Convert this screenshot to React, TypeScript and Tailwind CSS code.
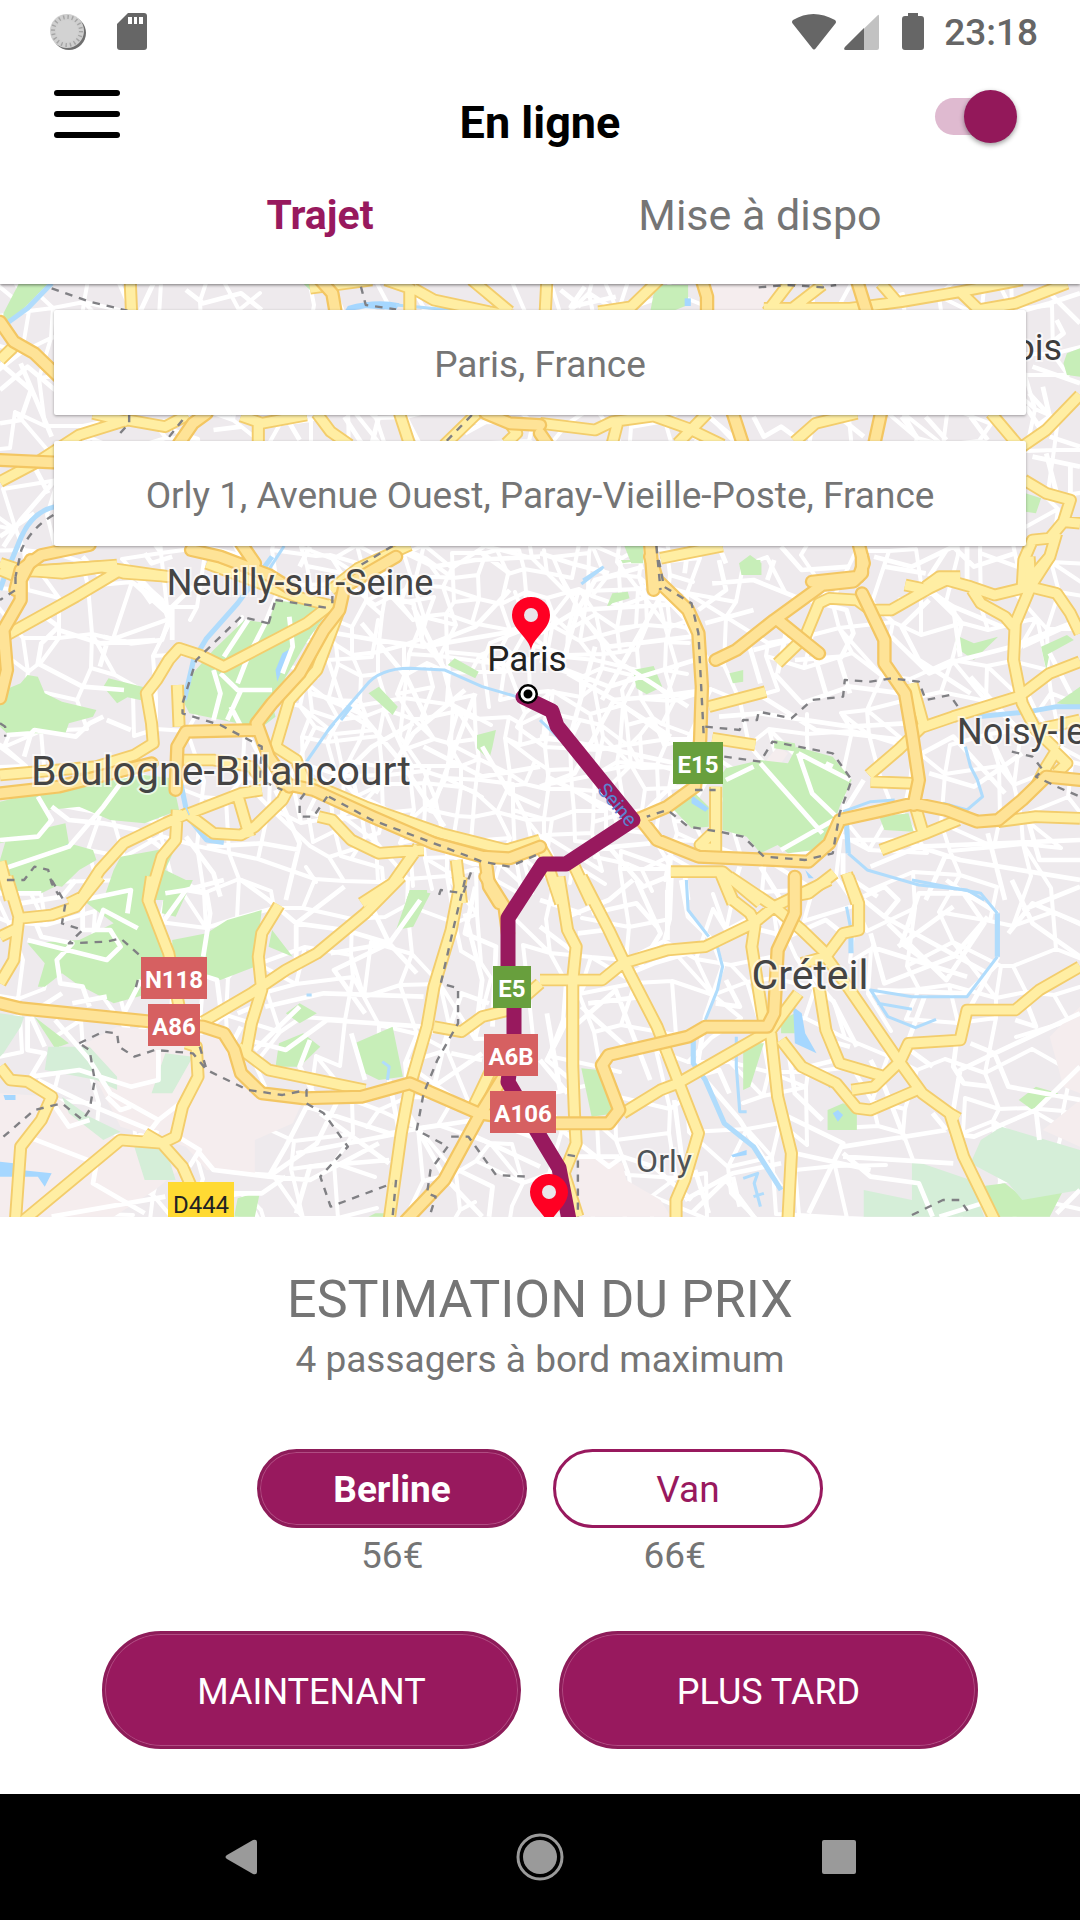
import { useState } from "react";

type Tile = {
  x: number;
  y: number;
  rose: string;
  park: string;
  mint: string;
  lake: string;
  river: string;
  stream: string;
  street: string;
  road: string;
  highway: string;
  border: string;
};

// Each tile is a 1568-unit wide sheet that covers 540 pixels of the map.
const TILES: Tile[] = [
  {
    x: 0,
    y: 280,
    rose: "",
    park: "M60 0H150L60 95L10 135L10 100ZM870 0H930L925 30H900Z",
    mint: "",
    lake: "M1000 95L1010 78Q1090 55 1160 70L1150 90L1060 85Z",
    river: "M0 145L80 85L150 10M160 680Q95 695 62 770L30 850",
    stream: "M1150 75L1310 90M825 798L780 870M0 930L30 850",
    street:
      "M450 0L400 110M540 30L590 70L700 40L760 90M0 250L90 330L60 420L0 430M60 250L150 470M0 330L80 260L160 330M100 700L0 770M160 600L60 720L10 800M100 560L140 640M830 410L870 480M1000 410L1050 490M1100 410L1080 490M620 450L700 440M1350 460L1420 420L1470 410M240 830L300 900M420 820L440 850L500 830M1180 820L1260 860L1380 840L1568 830M900 800L870 860M1400 820L1480 880",
    road: "M378 0L382 100M0 240L45 195M900 25L1080 0M1120 0L1190 25V100M1200 25L1260 60L1420 95L1500 110M1370 0L1480 95M0 605L110 545L230 465L370 420L480 440L545 405M270 400L370 425M700 408L760 430L890 405M750 420V490M920 400L960 455L1015 495M1160 400L1190 495M1385 400L1290 495M1480 430L1500 460L1470 490M0 850L60 870L180 880L300 860L360 880L500 890M90 875L340 855M1190 795L1040 865L960 930",
    highway:
      "M930 0L965 40L975 100M0 125L40 185L100 220L170 290M0 540L170 548M600 400L560 430L520 490M1410 400L1480 430L1568 435M45 930L60 870L120 825L260 795M555 810L640 830L780 885L850 930M700 790L740 850",
    border:
      "M150 25L260 65L370 92M1048 20L1062 75L1150 88M375 405V430L340 470M530 420L480 485M1370 405L1290 490M155 705Q90 745 62 810L45 890M1140 798L1040 860",
  },
  {
    x: 540,
    y: 280,
    rose: "M490 10H720L650 95H490Z",
    park: "M335 15H430L430 75L380 95H320ZM1568 205L1530 220L1520 250L1530 285L1568 290ZM1410 640L1455 655L1440 700L1410 695ZM245 798H300V850L265 850ZM610 825L643 850V885H585L578 850Z",
    mint: "",
    lake: "M420 55H438V78H420Z",
    river: "",
    stream: "M125 900L185 860",
    street:
      "M60 30L120 80M130 20L90 80L220 50M1410 90L1480 70L1568 40M1480 40L1568 130M1500 120L1520 160L1470 200M1420 340L1500 430M1410 380L1470 470M1460 320L1480 410L1440 440M1430 260L1568 310M1430 530L1568 560M1480 470L1568 500M1470 520L1500 640M1540 560V640M490 410L560 470M620 410L650 470L700 440L740 470M880 420L940 470M1050 410L1100 480M1120 410L1180 480M1250 410L1300 480M0 820L90 850L200 880M430 800L420 880M540 850L520 800M700 800L760 870L900 860M970 830L1080 860L1200 800L1260 860L1380 820M1240 800V900M1180 810L1130 890",
    road: "M20 0L15 100M345 0L265 80L170 95M730 0L660 95M820 15L720 95M650 85H900L1050 65L1220 35L1400 0M1220 35L1280 95M990 10L1040 70M1270 90L1380 70L1530 10M0 430L160 450L210 425L330 408L430 445L530 495M485 400L400 490M225 430L210 490M740 485L800 430L920 400M1310 400L1400 510M1400 500L1470 450L1568 345M1405 600L1470 640L1540 660L1520 725L1480 775L1430 780L1405 840L1400 930M1520 725L1568 730M1500 760L1480 830L1430 890M350 835L530 798M1120 920L1160 890L1220 890",
    highway:
      "M470 0L485 50V100M920 0L950 100M560 400L590 495M990 400L970 495M320 795L330 930M925 790L940 850L925 890L790 905M0 460L20 490",
    border: "M635 22L720 15L820 22L860 15M338 798L350 930",
  },
  {
    x: 0,
    y: 560,
    rose: "",
    park: "M80 345L110 350L130 400L180 425L280 450L270 470L200 490L190 520H20L0 500V395L60 370ZM315 355L430 385L430 425L370 412L340 430L300 380ZM800 120L960 145L900 230L830 350L790 430L800 470L750 510L690 490L550 460L530 420L560 340L620 270L710 180L780 190ZM0 725L100 700L420 645L500 655L520 750L420 790L320 780L230 740L140 750V800L60 835L0 850ZM20 830L190 790L200 850L270 870L280 900L230 930L180 980L60 960L0 990V900ZM350 890L510 860L480 930L540 960L500 1020H300L330 930ZM1320 295L1390 335L1380 355L1300 315ZM1100 380L1155 440L1140 465L1070 400ZM1385 525L1440 510L1430 560L1420 600L1385 565ZM1190 990H1240V1020H1180Z",
    mint: "",
    lake: "M850 262L830 300L805 365L800 330L820 280ZM190 855L210 850L200 868Z",
    river: "M790 -10L690 130L600 235L562 300L535 420M525 670L545 770L600 840L650 848M0 90L30 0",
    stream:
      "M890 605L960 500L1060 380Q1100 325 1190 325L1290 330L1400 380L1500 410L1568 450M950 515L970 490M990 480L1020 440",
    street:
      "M380 40L470 120L490 180L470 240L380 250L300 230M130 170L170 200L120 250L110 310L240 380L360 390M170 210L290 250L450 240M310 250L290 320M400 70L440 130M560 80L500 140L500 240M720 180L650 290M840 170L850 260L820 340M770 190L720 290L690 370M620 330L640 400L620 480M700 390L660 480M640 340L690 390H790M700 500L670 440M20 525L90 520L100 510L220 530L260 490L300 470M90 520L70 590M310 480L380 510M110 710L150 780L110 830L0 840M150 740L200 780L300 790L400 810L490 880M350 670L300 740L200 860L0 930M540 830L620 940L640 1010M600 860L760 850L870 870M760 700L700 700M800 690L870 850L830 1020M480 1000L540 990M0 1000L120 1000M1000 640L1080 560L1200 490M920 210L1090 240L1230 260L1380 200L1480 90M1050 190L1180 350L1240 480M1090 100L1200 130L1230 260M1230 260L1568 200M1200 140L1300 350M1350 390L1200 520L1090 700M1380 400L1250 760M1030 440L1160 600L1290 800M900 400L1050 440M1400 560L1480 700L1568 740M1230 560L1400 650L1568 620",
    road: "M0 30L60 55M60 35L290 20L490 50M350 30L220 110L20 225M515 375L520 500M965 130L890 190L650 320L580 285L520 265L490 300L455 360L425 400L440 490L445 550L390 585L280 620L0 645M985 150L920 330L840 420L800 560L860 600L890 680M500 600H620L730 620L760 660M690 705L725 830M925 770L965 780L1020 840L1100 880L1230 870M1215 860L1140 970L1050 1030M1325 900L1340 1030M550 760L700 700L760 690M550 765L620 820L700 825L740 800L820 720L840 680M545 760L480 790L360 850L290 930L240 1010L200 1030M515 750L510 840L470 890L430 1030M0 905L30 1020M900 670L1060 740L1280 820L1470 870L1568 840M600 10L860 110L970 140",
    highway:
      "M90 0L60 60L60 120L10 210L20 330L0 415M1150 -10L1000 80L985 150L940 210L870 340L790 430L745 490L780 590L840 680M750 510L540 515L515 560L510 690M0 700L170 680L440 610M820 670L910 690L1080 770L1260 850L1400 890L1480 895L1568 860M1410 900L1420 980L1450 1030",
    border:
      "M45 50V90L0 120M0 490L15 500V530M800 120L960 145M965 130V90M780 190L800 120M780 190L700 170L620 250L570 300L530 430V460L640 495L760 560L755 660L820 690M955 710L1080 780L1260 850L1400 905L1480 920L1568 880M885 700L870 720V770H910L950 710M20 960L70 960L100 920L140 930L150 970L170 1005M1275 1005L1280 990L1345 1000L1370 930",
  },
  {
    x: 540,
    y: 560,
    rose: "M690 560L720 580L700 610H650Z",
    park: "M540 625L640 600L720 610L745 560L850 590L905 660L870 740L850 800L800 870L720 880L690 855L640 880L600 830L530 810V640ZM680 540L740 550L745 575L680 565ZM380 740L450 700L490 740V800L440 805ZM270 330L330 318L355 380L310 403L280 385ZM190 150L210 100L255 95L260 115L210 130ZM550 340L590 330V365L560 370ZM580 20L610 0H640V40L590 45ZM1205 225L1260 250L1330 230L1290 270L1260 300L1210 265ZM1455 260L1530 225L1550 240L1480 280L1470 330ZM985 770L1070 760L1085 815L1000 810ZM1568 380V440L1500 430ZM235 0H300L240 10Z",
    mint: "",
    lake: "M440 705L490 745L480 755L440 730ZM770 930L795 955H780Z",
    river: "M890 790L895 880M1270 470L1420 455L1500 440L1568 440",
    stream:
      "M120 72L180 25M0 480L60 540M895 880L950 930L1100 975L1240 990L1290 1020M880 755L960 725L1030 720M1235 560L1250 620L1270 660L1285 710L1240 750L1170 730",
    street:
      "M0 220L110 150L160 60L300 20M110 150L430 130M110 150L60 330M110 150L220 300L430 440M60 50L130 180L200 260L440 230M0 300L200 380L450 300M210 420L460 400M215 420L380 530M215 420L100 640L0 680M215 420L80 340M0 530L170 560L440 620M160 260L80 560M350 110L180 420M290 770L440 620M520 0L540 90L460 150M500 70L620 60L740 110L890 150L910 220L870 300L900 400M480 190L620 150M600 230L640 370M790 260L830 400M720 190L690 340M680 340L760 430L900 380L1050 400M630 400L800 510L1060 540M740 300L880 290M520 470L640 460L900 500L1060 490M640 610L820 820M750 580L790 700L870 780M750 580L900 660M850 620L830 610M540 660L620 620M870 770L700 870M620 270L730 240M1020 230L1130 340L1220 300L1370 260L1540 190M1130 120L1050 200L1100 300L1250 400M1040 120L1140 100L1200 140L1340 200M1200 140L1220 290M1400 260L1568 180M1480 280L1540 400M1250 350L1380 500M1130 640L1260 680L1400 580M1110 580L1200 530L1350 700M940 660L880 760M900 840L1040 840L1220 900L1568 960M960 920L1100 860L1568 840M1180 880L1120 1020M1300 820L1350 1020M1420 790L1450 900L1568 900M680 0L660 60M1000 20L1120 40M20 650L290 790L380 880L370 1010M100 880L220 860L320 850M200 860L300 980L420 930M420 940L430 1020M640 920L700 1020M580 920L550 1020M880 880L880 940L980 1010",
    road: "M690 180L810 280M690 310L770 230L810 130L840 115L920 120L960 150L1020 150L1130 85L1180 60L1250 80L1320 105L1420 80L1500 100L1540 160L1568 220M1060 75L1130 90M1420 -10L1425 80L1380 190L1375 300L1400 430L1440 510L1500 570M1480 -10L1430 70M1255 90L1280 130L1350 170L1375 200M490 440L655 395M500 535L625 555M1080 370L1115 500L1200 470L1390 410L1480 340L1568 305M1110 500L1040 570L955 645M960 665L1085 670M510 680V870L465 855L510 810M380 935H530L640 1030M520 930L560 1030M740 970V1030M855 940L780 1000L730 1010M890 940L920 1030M990 870L1120 820L1215 780M1090 740L1110 810M1330 785L1440 770L1568 775M1500 570L1470 620L1440 680M1490 570L1530 610L1500 640M1440 510L1568 480M15 890L60 1030M100 920L150 1030M0 860L40 930",
    highway:
      "M320 -10L340 60L430 150L460 220L470 380L465 540L450 680L370 740L290 775M510 300L570 270L680 180L820 75L910 65L935 40V-10M690 180L810 280M935 100L1000 240V310L1060 400L1080 520L1100 660L1085 735M290 775L340 840L460 890L780 905L840 850L870 780L980 755L1085 730L1180 750L1270 785L1330 780L1400 720L1470 650L1568 660",
    border:
      "M345 0L360 80L440 130L460 220L475 520M480 500L580 510L590 480L630 480L635 455L730 475L790 420L880 410L885 360L960 365L1020 355L1100 365L1120 420L1190 405L1220 450M535 590L640 605L675 545L850 580L905 660L870 760L850 880L770 900L650 890L590 830L520 815L430 800L370 750L310 770M450 690L510 690M1370 575L1430 590L1460 630L1440 650L1500 680L1568 710",
  },
  {
    x: 0,
    y: 880,
    rose: "M340 440L640 470L700 620L880 660L850 730L740 780V880L600 870L540 800L350 740L280 600L230 500ZM0 640L160 650L350 780L520 870L450 930L330 1010H0Z",
    park: "M80 190L230 180L330 130L240 60L420 20L440 100L500 220V320L400 350L330 370L220 310L180 280L130 320H110L130 250ZM480 0H560L510 110L470 100ZM500 180L600 160L660 120L760 90L740 260L640 300L500 290ZM790 150L850 230L780 200ZM0 0H200L120 40L20 30ZM1190 30L1250 40L1200 140L1150 150ZM1030 490L1140 440L1170 590L1100 600L1060 580ZM830 400L870 370L920 400L870 430ZM810 490L880 460L930 500L870 560H800ZM100 410L200 490L160 505ZM690 955L755 935L740 1010H680ZM1090 1000H1130V1010H1070Z",
    mint: "M0 400L70 410L60 440L10 520L0 530ZM140 500L260 500L340 590V630L280 600L130 570ZM480 520L560 530L500 640H440ZM180 650L260 710L350 755L300 780L200 700ZM390 800L480 800L510 900H420Z",
    lake: "M0 845L40 850L60 870L150 880L130 920L110 890L0 890ZM10 645H45V660H15Z",
    river: "",
    stream: "M1110 545L1130 560L1125 600M890 345H905",
    street:
      "M60 70L180 50L220 0M80 180L310 240L350 200L320 150H240V60L380 30L370 100M280 150L300 90L400 145M100 120L120 170L210 190L165 240L175 310L240 320L260 380M180 340L120 380M210 370L310 350M360 400L410 300M470 130L540 30L600 40L610 100L590 230M540 30L650 0M600 290L630 300L640 380M80 410V510L130 520L90 590L230 570L380 620L460 600V510M90 410L130 500M160 420L260 540L320 640L460 720L560 640M110 600L250 670L460 760M380 680L350 690L310 650M460 720L430 760M160 680L200 740L260 720M500 760L580 810L550 860M580 820L620 870L780 890L830 800L890 680M80 770L280 850L270 910L420 1000M150 1010L480 950M680 940H760L830 890M750 400L720 480L830 510L950 420L1230 440M770 380L940 340L1230 350M860 130V260L780 300M860 130L1000 150L1130 190L1210 280M1130 190L1070 60M1130 190L1220 60M1130 190L970 270L1060 400M1130 190L960 220M700 0L780 60L860 130L1000 20M740 510L870 380M900 480L870 560L910 640M1020 460L1060 600M1130 600L1160 760L860 820M890 680L1130 760L1380 720M930 700L1130 850M1000 620L920 790L780 890L900 900L1100 790M860 1000L900 860L1130 840M1290 490L1340 340L1420 370M1290 490L1260 620L1400 520M1310 520L1400 540M1350 100L1400 300L1380 470M1380 20L1350 160L1440 200L1430 440M1180 690L1290 890L1400 1010M1360 760L1568 860M1330 870L1430 920L1420 1010M1440 730L1568 780M700 440L680 480M690 400L760 370",
    road: "M590 425L730 340L830 270L920 220L1060 100L1165 -10M810 75L760 160L750 230L760 330L730 430L715 515M690 500L780 570L1060 630M440 -10L430 60L490 220L520 380M290 -10L220 80L150 105L60 115M20 -10L55 110L40 240L0 310M0 170L50 145M540 490L570 500L575 590L530 680L510 770L470 790L350 780L70 1020M420 760L470 790L530 860L560 930M0 560L30 600L80 605L150 650L120 720L60 800L45 1020M1340 -10L1310 150L1260 320L1240 440L1190 620L1165 760L1130 1020M1260 440L1340 455L1400 410L1480 390L1568 310M1430 560L1370 690M1450 600L1400 700",
    highway:
      "M0 370L60 385L440 425L590 440L650 460L680 510L700 580L760 640L880 655L1050 650L1190 610L1390 700L1568 730M1410 -10L1465 80L1475 160M1480 560L1390 710L1290 900L1180 1020",
    border:
      "M150 0L190 70L180 130L240 150L200 190L310 185L350 175L410 230M400 300L390 340M230 490L300 455L340 460L345 500L390 530L450 510L560 520L600 570L660 600L720 630L820 645L890 630L890 670L940 700L1010 800L930 890L960 980L1140 910M1350 0L1320 130L1280 310L1330 325V430L1270 540L1230 640L1210 750L1300 800M1310 770L1360 770L1440 885L1530 890M1300 800L1250 870L1240 940L1265 950L1250 1000M1150 900L1140 1010M10 770L100 690L180 670L240 720L260 690L275 600L260 510L230 490M580 500L600 570",
  },
  {
    x: 540,
    y: 880,
    rose: "M110 830L240 850L250 900L350 960L380 1010H110ZM1568 380L1480 470L1520 620L1568 640ZM1568 660L1460 750L1568 800ZM0 900L60 1010H0Z",
    park: "M590 490L650 490L610 620L590 630ZM700 420L740 400V460L700 460ZM835 690L880 670L920 690V750H835ZM1390 660L1440 620L1505 640L1430 690ZM120 565L170 570L220 700L150 710ZM1270 920L1350 910L1400 950L1520 930L1480 1010H1320Z",
    mint: "M1340 740L1568 810V930L1400 960L1360 910L1250 850L1280 780ZM1080 840L1250 900L1290 1010H940V930L1080 960Z",
    lake: "M735 380L760 400L770 460L803 520L740 490ZM850 700L865 690L880 705L865 725ZM830 605H855L840 625ZM555 825L600 810V825L560 832Z",
    river: "M445 480V550L480 600L535 730L620 800L700 930M1328 100V230M903 150V220",
    stream:
      "M425 0L430 90L490 170M515 200L530 260L515 330L480 420M570 470V560L580 695H600M1080 0L1280 40L1328 100M1328 230L1240 350L1080 350L960 330L1010 410L1090 443L1150 418M980 370L1080 388M890 80L903 150M590 895L632 880L622 910L640 980M620 950L650 940",
    street:
      "M410 0L430 110L500 180L530 260L480 410L455 570L580 720L700 920M0 60L120 100M80 110L200 60L270 0M280 0L350 160L290 260M370 30V180M150 100L280 70L340 140M110 160L190 150L230 240M0 140L90 210M130 310L50 480L20 540L90 600M0 540L80 640M260 280L330 250L430 220M110 430L220 330L320 600M120 380L260 510M140 370L300 350M340 500L410 600L520 570L550 640M540 300L580 380L510 370M640 150L720 170L830 120L890 170M940 50L1000 20L1040 60L1000 110L940 60M1000 110L1300 280M960 160L1000 310L1200 230L1300 110M960 200L1240 290M1010 130L1180 300L1290 130L1230 40L1100 40L1050 190L1130 250M1040 200L1200 80M980 330L1240 340L1330 250M1330 100L1220 30L1180 0M1370 0L1430 130L1568 230M1400 90L1568 20M1360 160L1430 70L1568 130M1070 480L1120 340M1330 230L1250 380M1250 490L1320 520L1568 400M1320 520L1360 620L1568 660M1320 520L1220 570L1200 690M1210 480L1200 560L1230 610L1310 620M1140 560L1060 500M1380 420L1440 440L1410 360M1190 760L1260 770L1440 690L1568 560M1440 690L1450 780M720 500L740 640L820 720M720 710L880 790L860 830L780 1000M880 800L1180 750M880 820L960 890L1100 910L1140 1010M880 830L1200 850M740 820L960 870M0 700L200 860L240 830L330 860L440 960M110 830H230M390 660L420 900M420 960L560 880L700 850M440 1000L540 900L620 1010M450 870L490 1000M560 890L580 980M780 560L860 540M900 500L830 480M850 360L920 500M1140 700L1180 750M1500 1000L1568 930M1160 1010L1300 965M960 540L1000 620L1060 780M20 400L60 640",
    road: "M55 -10L80 150L105 200L95 300V560L100 700L105 790L70 880L110 1010M120 -10L200 150L260 280L340 440L400 600L460 760L420 900L395 960V1020M0 300H180L240 250L370 210L480 200L620 130L680 80L840 0M550 -10L680 80L760 150L830 220M530 -10L560 60L610 100L625 130L615 200L650 430M895 -10L925 70V150L880 160L830 230M760 250L830 230L900 330L1040 540L1110 640L1190 700L1230 830L1320 1020M750 340L670 450L400 610L350 630L240 700M670 460L690 650L730 820L720 1020M700 480L760 560L860 610L920 685L960 690L1095 630M810 320L830 450L870 550L1000 590L1045 545L1070 490L1220 480L1240 390H1380L1450 330L1568 260M1000 590L970 620L905 630M1190 700L1215 715",
    highway:
      "M740 -10V100L690 210L680 400L660 440L480 440L430 470L200 525L180 555L230 690L200 730H0",
    border: "M80 825L110 830V1010M1080 1005L1170 960L1220 960L1250 1005",
  },
];

type PathKey = Exclude<keyof Tile, "x" | "y">;

function Layer({ of, ...style }: { of: PathKey } & React.SVGProps<SVGPathElement>) {
  return (
    <>
      {TILES.map((t) => (
        <g key={t.x + "-" + t.y} transform={`translate(${t.x} ${t.y}) scale(0.3444 0.3333)`}>
          <path d={t[of]} {...style} />
        </g>
      ))}
    </>
  );
}

// Side streets: a jittered lattice, finer in the city centre.
function lattice(x0: number, y0: number, x1: number, y1: number, step: number, keep: number, seed: number) {
  let s = seed;
  const rnd = () => {
    s = (s * 16807) % 2147483647;
    return s / 2147483647;
  };
  const cols = Math.ceil((x1 - x0) / step) + 1;
  const rows = Math.ceil((y1 - y0) / step) + 1;
  const pts = Array.from({ length: rows }, (_, r) =>
    Array.from({ length: cols }, (_, c) => [
      Math.round(x0 + (c + (rnd() - 0.5) * 0.75) * step),
      Math.round(y0 + (r + (rnd() - 0.5) * 0.75) * step),
    ]),
  );
  let d = "";
  for (let r = 0; r < rows - 1; r++) {
    for (let c = 0; c < cols - 1; c++) {
      const [x, y] = pts[r][c];
      if (rnd() < keep) d += `M${x} ${y}L${pts[r][c + 1].join(" ")}`;
      if (rnd() < keep) d += `M${x} ${y}L${pts[r + 1][c].join(" ")}`;
      if (rnd() < keep * 0.25) d += `M${x} ${y}L${pts[r + 1][c + 1].join(" ")}`;
    }
  }
  return d;
}

const SIDE_STREETS = lattice(-20, 270, 1110, 1240, 36, 0.7, 77);
const CENTRE_STREETS = lattice(310, 550, 690, 880, 24, 0.8, 1234);
const ROUTE = "M523 697L552 711L557 726L633 820L566 864H543L508 918V970L514 1000V1035L508 1082L542 1140L559 1168L570 1225";

const PLACES = [
  { name: "ois", x: 1062, y: 360, size: 36, anchor: "end", fill: "#3c3c3c" },
  { name: "Neuilly-sur-Seine", x: 300, y: 595, size: 36, anchor: "middle", fill: "#444444" },
  { name: "Boulogne-Billancourt", x: 221, y: 785, size: 41, anchor: "middle", fill: "#444444" },
  { name: "Paris", x: 527, y: 671, size: 35, anchor: "middle", fill: "#222222" },
  { name: "Noisy-le", x: 957, y: 744, size: 36, anchor: "start", fill: "#444444" },
  { name: "Créteil", x: 810, y: 989, size: 41, anchor: "middle", fill: "#444444" },
  { name: "Orly", x: 664, y: 1172, size: 32, anchor: "middle", fill: "#4f5356" },
] as const;

const SHIELDS = [
  { name: "E15", x: 673, y: 742, w: 50, bg: "#689f3d", fg: "#ffffff" },
  { name: "N118", x: 141, y: 957, w: 66, bg: "#d66061", fg: "#ffffff" },
  { name: "A86", x: 148, y: 1004, w: 52, bg: "#d66061", fg: "#ffffff" },
  { name: "E5", x: 493, y: 966, w: 38, bg: "#689f3d", fg: "#ffffff" },
  { name: "A6B", x: 484, y: 1034, w: 54, bg: "#d66061", fg: "#ffffff" },
  { name: "A106", x: 490, y: 1091, w: 66, bg: "#d66061", fg: "#ffffff" },
  { name: "D444", x: 168, y: 1182, w: 66, bg: "#ffda33", fg: "#222222" },
];

function Pin({ x, y }: { x: number; y: number }) {
  return (
    <g transform={`translate(${x} ${y})`}>
      <path d="M0 0C-2-13-19-20-19-35A19 18 0 0 1 19-35C19-20 2-13 0 0Z" fill="#ff0023" />
      <circle cy="-35" r="7" fill="#eae6ea" />
    </g>
  );
}

function RouteMap() {
  const line = { fill: "none", strokeLinejoin: "round", strokeLinecap: "butt" } as const;
  return (
    <svg
      className="absolute inset-0 h-full w-full"
      viewBox="0 284 1080 933"
      preserveAspectRatio="xMidYMin slice"
      role="img"
      aria-label="Carte du trajet de Paris à Orly"
    >
      <rect y="200" width="1080" height="1100" fill="#eeeaed" />
      <g {...line} stroke="#ffffff" strokeLinecap="round">
        <path d={SIDE_STREETS} strokeWidth="4" />
        <path d={CENTRE_STREETS} strokeWidth="4" />
      </g>
      <Layer of="rose" fill="#f5edee" />
      <Layer of="park" fill="#c7eeb8" />
      <Layer of="mint" fill="#d5eed8" />
      <Layer of="lake" fill="#a5d7ff" />
      <Layer of="street" {...line} stroke="#ffffff" strokeWidth="14" />
      <Layer of="river" {...line} stroke="#b0dcfc" strokeWidth="15" />
      <Layer of="stream" {...line} stroke="#b0dcfc" strokeWidth="9" />
      <Layer of="road" {...line} stroke="#f3cd6c" strokeWidth="38" />
      <Layer of="road" {...line} stroke="#ffeea3" strokeWidth="27" />
      <Layer of="highway" {...line} stroke="#f3c662" strokeWidth="42" strokeLinecap="round" />
      <Layer of="highway" {...line} stroke="#fee397" strokeWidth="29" strokeLinecap="round" />
      <Layer of="border" {...line} stroke="#808084" strokeWidth="7" strokeDasharray="22 20" />
      <path d={ROUTE} {...line} stroke="#98195e" strokeWidth="15" strokeLinecap="round" />
      <circle cx="528" cy="694" r="10" fill="#000000" />
      <circle cx="528" cy="694" r="6" fill="none" stroke="#ffffff" strokeWidth="3" />
      <g fontFamily="Roboto, sans-serif">
        <text
          fontSize="20"
          fill="#5b82d0"
          textAnchor="middle"
          transform="translate(612 809) rotate(50)"
        >
          Seine
        </text>
        {PLACES.map((p) => (
          <text
            key={p.name}
            x={p.x}
            y={p.y}
            fontSize={p.size}
            textAnchor={p.anchor}
            fill={p.fill}
            stroke="#ffffff"
            strokeOpacity="0.6"
            strokeWidth="4"
            paintOrder="stroke"
          >
            {p.name}
          </text>
        ))}
        {SHIELDS.map((s) => (
          <g key={s.name}>
            <rect x={s.x} y={s.y} width={s.w} height="42" fill={s.bg} />
            <text
              x={s.x + s.w / 2}
              y={s.y + 31}
              fontSize="24"
              fontWeight={s.name === "D444" ? 400 : 700}
              textAnchor="middle"
              fill={s.fg}
            >
              {s.name}
            </text>
          </g>
        ))}
      </g>
      <Pin x={531} y={650} />
      <Pin x={549} y={1227} />
    </svg>
  );
}

function StatusBar() {
  return (
    <div className="flex h-[66px] items-center justify-between pl-[49px] pr-[42px]">
      <div className="flex items-center gap-[28px]">
        <svg className="h-[40px] w-[40px]" viewBox="0 0 40 40" aria-hidden="true">
          <circle cx="20" cy="20" r="17" fill="#6f6f6f" />
          <circle cx="18" cy="18" r="17" fill="#cfcfcf" />
          <circle cx="18" cy="18" r="14" fill="none" stroke="#a4a4a4" strokeWidth="4" strokeDasharray="1.4 3" />
          <circle cx="18" cy="18" r="11" fill="#d2d2d2" />
        </svg>
        <svg className="h-[40px] w-[30px]" viewBox="0 0 30 40" aria-hidden="true">
          <path d="M11 0H27Q30 0 30 3V34Q30 37 27 37H3Q0 37 0 34V11Z" fill="#666666" />
          <path d="M11 4H15V11H11ZM17 4H20V11H17ZM22 4H26V11H22Z" fill="#ffffff" />
        </svg>
      </div>
      <div className="flex items-center">
        <svg className="h-[40px] w-[132px]" viewBox="0 0 132 40" aria-hidden="true">
          <path d="M1 11Q-1 9 1 7Q21-5 43 7Q45 9 43 11L24 35Q22 38 20 35Z" fill="#666666" />
          <path d="M86 2Q87 1 87 4V35Q87 37 85 37H54Q51 37 53 34Z" fill="#c2c2c2" />
          <path d="M72 15V37H54Q51 37 53 34Z" fill="#666666" />
          <path d="M116 0H126V3H129Q132 3 132 6V34Q132 37 129 37H113Q110 37 110 34V6Q110 3 113 3H116Z" fill="#666666" />
        </svg>
        <span className="ml-5 text-[37px] font-medium leading-[66px] text-[#666666]">23:18</span>
      </div>
    </div>
  );
}

export default function App() {
  const [online, setOnline] = useState(true);
  const [car, setCar] = useState("Berline");
  const [from, setFrom] = useState("Paris, France");
  const [to, setTo] = useState("Orly 1, Avenue Ouest, Paray-Vieille-Poste, France");

  const field =
    "h-[105px] w-full rounded-[2px] bg-white pt-[3px] text-center text-[37px] text-[#757575] shadow-[0_1px_3px_rgba(0,0,0,0.35)] outline-none";
  const pill = "h-[79px] flex-1 rounded-full border-[3px] pt-[3px] text-[37px]";
  const filled = "border-[#8d1c59] bg-[#98195e] text-white shadow-[inset_0_0_0_1px_#b04c82]";
  const action =
    "h-[118px] flex-1 rounded-full border-[3px] border-[#8d1c59] bg-[#98195e] pt-[4px] text-[36px] text-white shadow-[inset_0_0_0_1px_#b04c82]";

  return (
    <div className="flex min-h-screen flex-col bg-white font-[Roboto,sans-serif]">
      <header className="relative z-10 h-[284px] bg-white shadow-[0_1px_3px_rgba(0,0,0,0.5)]">
        <StatusBar />
        <div className="grid grid-cols-3 items-start px-[54px] pt-6">
          <button type="button" aria-label="Menu" className="flex w-[66px] flex-col gap-[15px]">
            <span className="h-[6px] w-full rounded-full bg-black" />
            <span className="h-[6px] w-full rounded-full bg-black" />
            <span className="h-[6px] w-full rounded-full bg-black" />
          </button>
          <h1 className="pt-[7px] text-center text-[45px] font-bold leading-[52px] text-black">En ligne</h1>
          <label className="relative mr-[9px] flex h-[53px] w-[82px] items-center justify-self-end">
            <input
              type="checkbox"
              role="switch"
              aria-label="En ligne"
              checked={online}
              onChange={(e) => setOnline(e.target.checked)}
              className="peer h-[37px] w-[74px] appearance-none rounded-full bg-[#d0d0d0] checked:bg-[#dfbad0]"
            />
            <span className="pointer-events-none absolute left-0 h-[53px] w-[53px] rounded-full bg-[#eeeeee] shadow-[0_2px_5px_rgba(0,0,0,0.4)] peer-checked:left-auto peer-checked:right-0 peer-checked:bg-[#93185a]" />
          </label>
        </div>
        <nav className="grid grid-cols-2 px-[100px] pt-10" aria-label="Type de course">
          <button type="button" className="text-[41px] font-bold leading-[52px] text-[#98195e]">
            Trajet
          </button>
          <button type="button" className="text-[43px] leading-[52px] text-[#757575]">
            Mise à dispo
          </button>
        </nav>
      </header>

      <main className="flex flex-1 flex-col">
        <section className="relative min-h-[600px] flex-1 overflow-hidden">
          <RouteMap />
          <div className="relative flex flex-col gap-[26px] px-[54px] pt-[26px]">
            <input aria-label="Départ" className={field} value={from} onChange={(e) => setFrom(e.target.value)} />
            <input aria-label="Arrivée" className={field} value={to} onChange={(e) => setTo(e.target.value)} />
          </div>
        </section>

        <section className="flex flex-col items-center px-[102px] pb-[45px] pt-[53px] text-[#757575]">
          <h2 className="text-[52px] leading-[60px]">ESTIMATION DU PRIX</h2>
          <p className="pt-[8px] text-[37px] leading-[44px]">4 passagers à bord maximum</p>
          <div className="flex w-full max-w-[566px] gap-[26px] pt-[67px]">
            {["Berline", "Van"].map((name) => (
              <button
                key={name}
                type="button"
                aria-pressed={car === name}
                onClick={() => setCar(name)}
                className={`${pill} ${car === name ? `${filled} font-bold` : "border-[#98195e] bg-white text-[#98195e]"}`}
              >
                {name}
              </button>
            ))}
          </div>
          <div className="flex w-full max-w-[566px] pr-[13px] pt-[4px] text-center text-[37px] leading-[48px]">
            <span className="flex-1 pr-[6px]">56€</span>
            <span className="flex-1 pl-[6px]">66€</span>
          </div>
          <div className="flex w-full gap-[38px] pt-[51px]">
            <button type="button" className={action}>
              MAINTENANT
            </button>
            <button type="button" className={action}>
              PLUS TARD
            </button>
          </div>
        </section>
      </main>

      <footer className="grid h-[126px] grid-cols-3 items-center bg-black px-[92px]">
        <button type="button" aria-label="Retour" className="justify-self-center">
          <svg className="h-[36px] w-[32px]" viewBox="0 0 32 36" aria-hidden="true">
            <path d="M2 16L28 1Q32 0 32 3V33Q32 36 28 35L2 20Q-1 18 2 16Z" fill="#9a9a9a" />
          </svg>
        </button>
        <button type="button" aria-label="Accueil" className="justify-self-center">
          <svg className="h-[48px] w-[48px]" viewBox="0 0 48 48" aria-hidden="true">
            <circle cx="24" cy="24" r="22" fill="none" stroke="#9a9a9a" strokeWidth="3" />
            <circle cx="24" cy="24" r="17" fill="#9a9a9a" />
          </svg>
        </button>
        <button type="button" aria-label="Applications récentes" className="justify-self-center">
          <svg className="h-[34px] w-[34px]" viewBox="0 0 34 34" aria-hidden="true">
            <rect width="34" height="34" rx="2" fill="#9a9a9a" />
          </svg>
        </button>
      </footer>
    </div>
  );
}
